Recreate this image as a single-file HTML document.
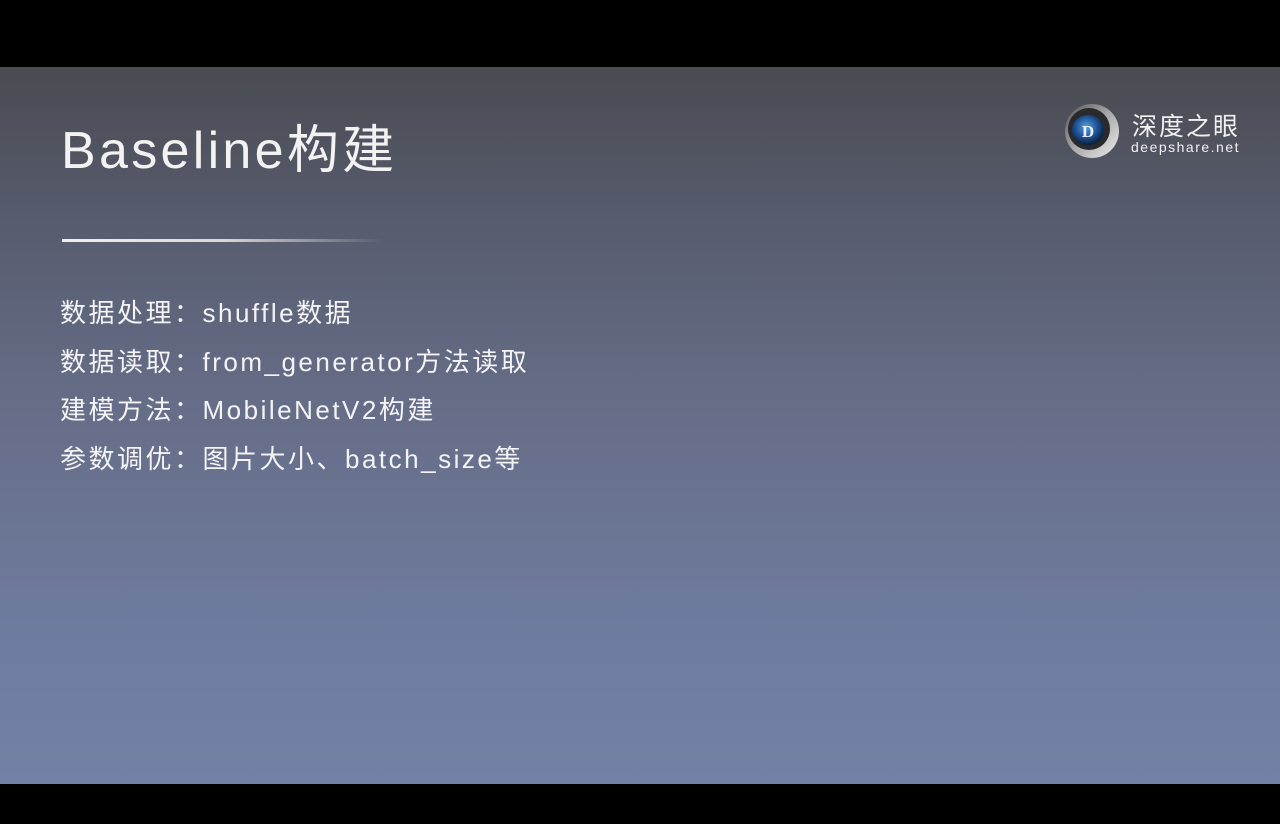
<!DOCTYPE html>
<html><head><meta charset="utf-8"><style>
html,body{margin:0;padding:0;width:1280px;height:824px;background:#000;overflow:hidden}
.slide{position:absolute;left:0;top:67px;width:1280px;height:717px;background:linear-gradient(180deg,#4a4b51 0%,#565b6c 20%,#656c86 45%,#6e7a9c 75%,#7381a6 100%);font-family:"Liberation Sans","Noto Sans CJK SC",sans-serif;color:#f4f4f4}
.title{position:absolute;left:61px;top:58px;font-size:52px;letter-spacing:3.3px;line-height:1;color:#f2f2f2}
.line{position:absolute;left:62px;top:172px;width:320px;height:3px;background:linear-gradient(90deg,#f0f0f0,#d8d8d8 50%,rgba(200,200,210,0))}
.items{position:absolute;left:60px;top:222px;font-size:26px;line-height:48.5px;letter-spacing:2.5px}
.logo{position:absolute;left:1064px;top:36px}
.cn{position:absolute;left:1132px;top:40px;font-size:25px;letter-spacing:2px;color:#f0f0f0;white-space:nowrap}
.en{position:absolute;left:1131px;top:72px;font-size:14px;letter-spacing:1.5px;color:#f0f0f0;white-space:nowrap}
</style></head><body>
<div class="slide">
<div class="title">Baseline构建</div>
<div class="line"></div>
<div class="items">数据处理：shuffle数据<br>数据读取：from_generator方法读取<br>建模方法：MobileNetV2构建<br>参数调优：图片大小、batch_size等</div>
<svg class="logo" width="56" height="56" viewBox="0 0 56 56">
<defs><radialGradient id="g" cx="0.45" cy="0.4" r="0.6"><stop offset="0" stop-color="#5aa0e0"/><stop offset="0.6" stop-color="#1c4f8f"/><stop offset="1" stop-color="#0a1f3c"/></radialGradient>
<linearGradient id="r" x1="0" y1="0" x2="1" y2="1"><stop offset="0" stop-color="#555"/><stop offset="0.5" stop-color="#aaa"/><stop offset="1" stop-color="#eee"/></linearGradient></defs>
<circle cx="28" cy="28" r="27" fill="url(#r)"/>
<circle cx="25" cy="26" r="21" fill="#2a2a2e"/>
<ellipse cx="24" cy="27" rx="16" ry="15" fill="url(#g)"/>
<text x="24" y="34" font-family="Liberation Serif,serif" font-weight="bold" font-size="17" fill="#e8eef8" text-anchor="middle">D</text>
</svg>
<div class="cn">深度之眼</div>
<div class="en">deepshare.net</div>
</div>
</body></html>
